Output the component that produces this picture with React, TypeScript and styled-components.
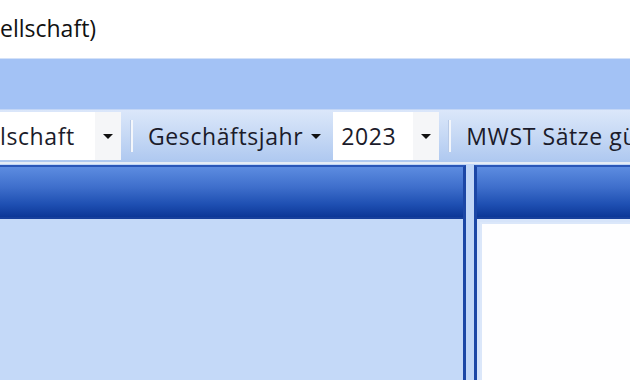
import React from "react";
import styled, { createGlobalStyle } from "styled-components";

const Global = createGlobalStyle`
  html, body { margin: 0; padding: 0; background: #ffffff; }
  body { width: 630px; height: 380px; overflow: hidden; font-family: "Open Sans", "Noto Sans", Arial, sans-serif; }
`;

const Page = styled.div`
  display: flex;
  flex-direction: column;
  width: 630px;
  height: 380px;
  overflow: hidden;
`;

const TitleBar = styled.div`
  height: 58px;
  background: #ffffff;
  display: flex;
  align-items: center;
  font-size: 23px;
  color: #111;
  white-space: nowrap;
  padding-bottom: 2px;
  box-sizing: border-box;
`;

const Band = styled.div`
  height: 51px;
  background: #a3c2f5;
  border-top: 1px solid #d3e1f8;
  box-sizing: border-box;
`;

const Toolbar = styled.div`
  height: 55px;
  display: flex;
  align-items: center;
  background: linear-gradient(to bottom, #dbe7fa 0%, #c8daf5 45%, #aec8f0 100%);
  border-top: 1px solid #c3d6f6;
  border-bottom: 2px solid #e6ecf5;
  box-sizing: border-box;
  white-space: nowrap;
  overflow: hidden;
  font-size: 23px;
  letter-spacing: 0.6px;
  color: #1b1b2a;
`;

const Combo = styled.div<{ $w: number; $pad: number }>`
  width: ${(p) => p.$w}px;
  height: 48px;
  background: #ffffff;
  display: flex;
  align-items: center;
  padding-left: ${(p) => p.$pad}px;
  box-sizing: border-box;
  flex: none;
`;

const ComboText = styled.span`
  flex: 1;
  overflow: hidden;
`;

const ComboArrow = styled.div`
  width: 26px;
  align-self: stretch;
  background: #f5f6f8;
  display: flex;
  align-items: center;
  justify-content: center;
`;

const Caret = styled.span`
  width: 0;
  height: 0;
  border-left: 5px solid transparent;
  border-right: 5px solid transparent;
  border-top: 5px solid #111;
`;

const Sep = styled.div`
  width: 2px;
  height: 32px;
  margin: 0 5px 0 9px;
  background: #f3f6fb;
  border-left: 1px solid #b7c9e6;
  flex: none;
`;

const DropButton = styled.div`
  display: flex;
  align-items: center;
  gap: 8px;
  padding: 0 12px 0 6px;
  flex: none;
`;

const Label = styled.span`
  padding-left: 4px;
`;

const Panels = styled.div`
  flex: 1;
  display: flex;
  gap: 8px;
  background: #c0d6f7;
  padding-top: 1px;
  min-height: 0;
`;

const Panel = styled.div<{ $w?: number }>`
  ${(p) => (p.$w ? `width: ${p.$w}px; flex: none;` : "flex: 1;")}
  display: flex;
  flex-direction: column;
  border-top: 2px solid #2a56b8;
  box-sizing: border-box;
`;

const LeftPanel = styled(Panel)`
  border-right: 3px solid #1c47a6;
  background: #c4d9f8;
`;

const RightPanel = styled(Panel)`
  border-left: 3px solid #1c47a6;
  background: #d6e4fa;
`;

const Header = styled.div`
  height: 52px;
  background: linear-gradient(to bottom, #5d8ce0 0%, #3f6fcc 40%, #1e4fb2 75%, #0c3797 100%);
  border-bottom: 2px solid #163f9c;
  box-sizing: border-box;
  flex: none;
`;

const Content = styled.div<{ $white?: boolean }>`
  flex: 1;
  background: ${(p) => (p.$white ? "#fefeff" : "#c4d9f8")};
  ${(p) =>
    p.$white
      ? "margin: 3px 0 0 3px; border-top: 2px solid #dbe7fa; border-left: 2px solid #dbe7fa;"
      : ""}
`;

export default function App() {
  return (
    <Page>
      <Global />
      <TitleBar>ellschaft)</TitleBar>
      <Band />
      <Toolbar>
        <Combo $w={121} $pad={0}>
          <ComboText>lschaft</ComboText>
          <ComboArrow>
            <Caret />
          </ComboArrow>
        </Combo>
        <Sep />
        <DropButton>
          <Label>Geschäftsjahr</Label>
          <Caret />
        </DropButton>
        <Combo $w={106} $pad={8}>
          <ComboText>2023</ComboText>
          <ComboArrow>
            <Caret />
          </ComboArrow>
        </Combo>
        <Sep />
        <DropButton>
          <Label>MWST Sätze gü</Label>
        </DropButton>
      </Toolbar>
      <Panels>
        <LeftPanel $w={466}>
          <Header />
          <Content />
        </LeftPanel>
        <RightPanel>
          <Header />
          <Content $white />
        </RightPanel>
      </Panels>
    </Page>
  );
}
